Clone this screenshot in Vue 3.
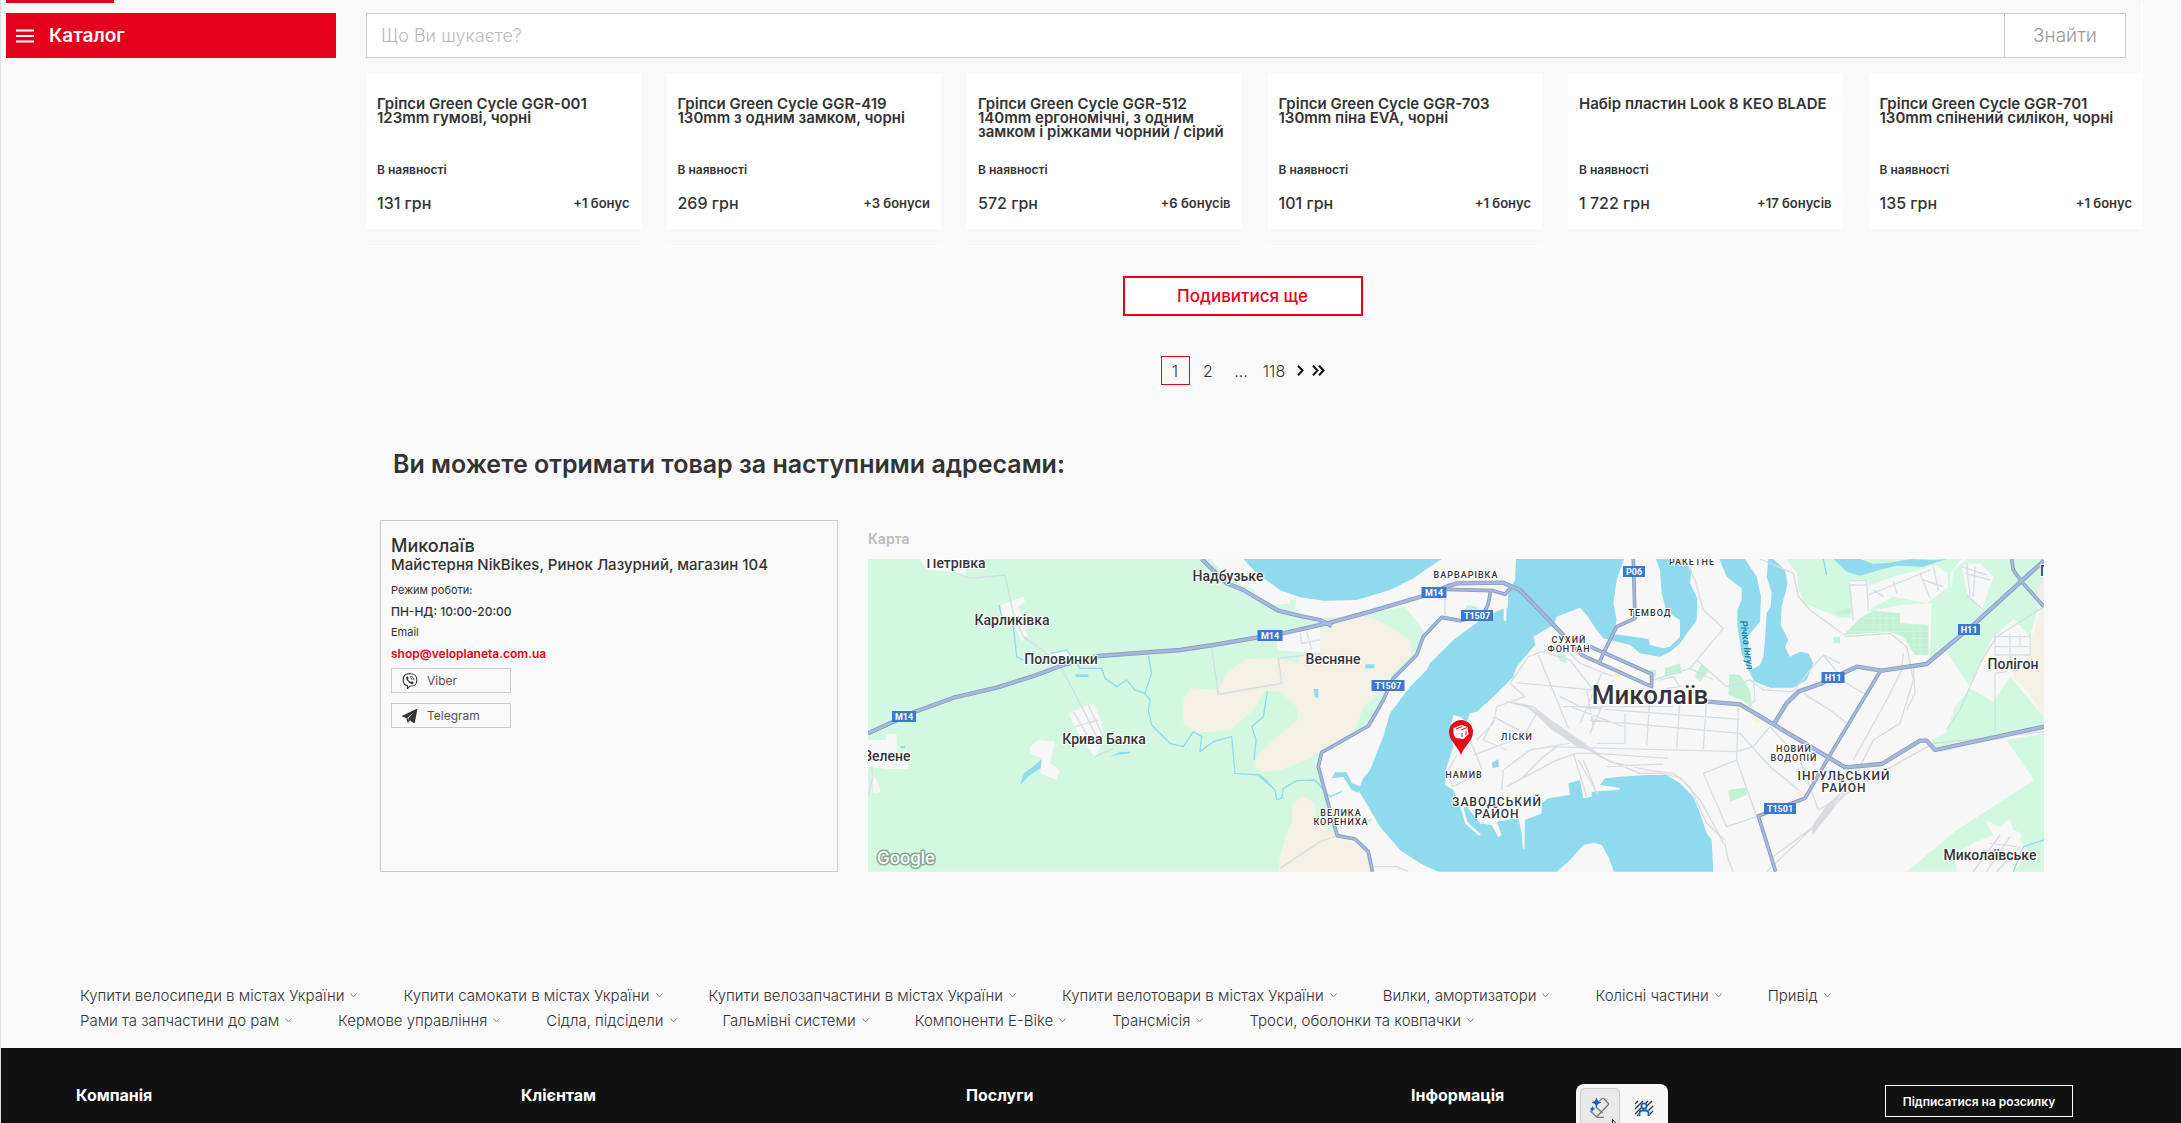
<script setup>
const products = [
  { title: 'Гріпси Green Cycle GGR-001 123mm гумові, чорні', price: '131 грн', bonus: '+1 бонус' },
  { title: 'Гріпси Green Cycle GGR-419 130mm з одним замком, чорні', price: '269 грн', bonus: '+3 бонуси' },
  { title: 'Гріпси Green Cycle GGR-512 140mm ергономічні, з одним замком і ріжками чорний / сірий', price: '572 грн', bonus: '+6 бонусів' },
  { title: 'Гріпси Green Cycle GGR-703 130mm піна EVA, чорні', price: '101 грн', bonus: '+1 бонус' },
  { title: 'Набір пластин Look 8 KEO BLADE', price: '1 722 грн', bonus: '+17 бонусів' },
  { title: 'Гріпси Green Cycle GGR-701 130mm спінений силікон, чорні', price: '135 грн', bonus: '+1 бонус' },
]

const linkRows = [
  [
    'Купити велосипеди в містах України',
    'Купити самокати в містах України',
    'Купити велозапчастини в містах України',
    'Купити велотовари в містах України',
    'Вилки, амортизатори',
    'Колісні частини',
    'Привід',
  ],
  [
    'Рами та запчастини до рам',
    'Кермове управління',
    'Сідла, підсідели',
    'Гальмівні системи',
    'Компоненти E-Bike',
    'Трансмісія',
    'Троси, оболонки та ковпачки',
  ],
]

const footerColumns = ['Компанія', 'Клієнтам', 'Послуги', 'Інформація']

// Map labels: text, centre x, baseline y, style
const places = [
  ['Петрівка', 88, 9, 'town'],
  ['Карликівка', 144, 66, 'town'],
  ['Надбузьке', 360, 22, 'town'],
  ['Половинки', 193, 105, 'town'],
  ['Весняне', 465, 105, 'town'],
  ['Крива Балка', 236, 185, 'town'],
  ['Зелене', 19, 202, 'town'],
  ['Полігон', 1145, 110, 'town'],
  ['Миколаївське', 1122, 301, 'town'],
  ['Г', 1176, 17, 'town'],
  ['Миколаїв', 782, 145, 'city'],
  ['ВАРВАРІВКА', 598, 19, 'area'],
  ['ТЕМВОД', 782, 57, 'area'],
  ['РАКЕТНЕ', 824, 6, 'area'],
  ['СУХИЙ', 701, 84, 'area'],
  ['ФОНТАН', 701, 93, 'area'],
  ['ЛІСКИ', 649, 181, 'area'],
  ['НАМИВ', 596, 219, 'area'],
  ['ВЕЛИКА', 473, 257, 'area'],
  ['КОРЕНИХА', 473, 266, 'area'],
  ['НОВИЙ', 926, 193, 'area'],
  ['ВОДОПІЙ', 926, 202, 'area'],
  ['ЗАВОДСЬКИЙ', 629, 247, 'district'],
  ['РАЙОН', 629, 259, 'district'],
  ['ІНГУЛЬСЬКИЙ', 976, 221, 'district'],
  ['РАЙОН', 976, 233, 'district'],
]

// Road shields: text, centre x, centre y, width
const shields = [
  ['M14', 36, 157, 24],
  ['M14', 402, 76, 25],
  ['M14', 566, 33, 25],
  ['T1507', 609, 56, 32],
  ['T1507', 520, 126, 33],
  ['P06', 766, 12, 22],
  ['H11', 965, 118, 23],
  ['H11', 1101, 70, 22],
  ['T1501', 912, 249, 32],
]

const highways = [
  'M-1236 580 -1095 515 -975 472 -850 443 -745 410 -650 375 -545 348 -300 330 -200 315 -65 292 0 282 150 248 270 215 430 168 500 140 530 130 670 128 720 150 850 285',
  'M-235 57 -160 130 -110 150 -5 212 60 228 120 240 155 258',
  'M1285 485 1380 493 1695 682 1805 672 1920 602 1940 602 1965 630 2292 560',
  'M1482 552 1520 490 1555 455 1620 432 1730 380 1805 392 1940 372 2085 250 2292 62',
]
const mainRoads = [
  'M500 148 640 152 675 163 690 145M632 152 625 190 610 225 540 242 485 232 430 290 410 345 340 415 310 480 265 558 125 637 115 680 150 810 172 887 225 897 265 935 277 995',
  'M1060 57 1065 235 1010 260 970 340 958 368M850 285 905 345 1115 440V402L920 315',
  'M2195 57 2200 90 2225 125 2292 200M1800 395 1647 650 1575 775 1435 828 1487 995',
]
</script>

<template>
  <div class="page">
    <header class="topbar">
      <div class="tab"></div>
      <div class="bar">
        <button class="catalog" type="button">
          <svg width="18" height="14" viewBox="0 0 18 14" aria-hidden="true"><path d="M0 1.5h18M0 7h18M0 12.5h18" stroke="#fff" stroke-width="2" /></svg>
          Каталог
        </button>
        <form class="search" @submit.prevent>
          <input type="search" placeholder="Що Ви шукаєте?" aria-label="Що Ви шукаєте?" />
          <button type="submit">Знайти</button>
        </form>
      </div>
    </header>

    <main class="content">
      <section class="grid">
        <article v-for="(p, i) in products" :key="p.title" class="cell" :class="{ underlined: i < 4 }">
          <div class="card">
            <h3>{{ p.title }}</h3>
            <p class="stock">В наявності</p>
            <p class="offer"><span class="price">{{ p.price }}</span><span class="bonus">{{ p.bonus }}</span></p>
          </div>
        </article>
      </section>

      <div class="pager">
        <button class="more" type="button">Подивитися ще</button>
        <nav class="pages">
          <a class="num current" href="#">1</a>
          <a class="num" href="#">2</a>
          <span class="num">...</span>
          <a class="num" href="#">118</a>
          <a class="step" href="#" aria-label="Далі"><svg width="7" height="11" viewBox="0 0 7 11"><path d="M1 .7 5.5 5.5 1 10.3" /></svg></a>
          <a class="step" href="#" aria-label="В кінець"><svg width="13" height="11" viewBox="0 0 13 11"><path d="M1 .7 5.5 5.5 1 10.3M7 .7l4.5 4.8L7 10.3" /></svg></a>
        </nav>
      </div>

      <section class="pickup">
        <h2>Ви можете отримати товар за наступними адресами:</h2>
        <div class="places">
          <div class="store">
            <p class="town-name">Миколаїв</p>
            <p class="address">Майстерня NikBikes, Ринок Лазурний, магазин 104</p>
            <p class="label">Режим роботи:</p>
            <p class="hours">ПН-НД: 10:00-20:00</p>
            <p class="label">Email</p>
            <p class="mail"><a href="mailto:shop@veloplaneta.com.ua">shop@veloplaneta.com.ua</a></p>
            <a class="chat" href="#">
              <svg width="16" height="16" viewBox="0 0 16 16" fill="none" stroke="#333" aria-hidden="true">
                <path d="M8 .8c5 0 6.800 1.500 6.800 6.200S13 13.200 8 13.200L5.500 15.500V12.800C2.400 12.100 1.200 10.500 1.200 7 1.200 2.300 3 .8 8 .8Z" stroke-width="1.100" />
                <path d="M5 3.600c.6-.3.9.1 1.600 1.200.4.700-.7 1-.5 1.500.4 1.300 1.400 2.300 2.700 2.700.5.200.8-.9 1.500-.5 1.100.8 1.500 1.100 1.200 1.700-.8 1.300-1.700 1.100-3.100.3C6.300 9.200 4.900 7.400 4.300 5.500 4 4.600 4.100 4.100 5 3.600Z" fill="#333" stroke="none" />
                <path d="M8 3.200c2.500.1 3.800 1.400 3.900 3.900M8.200 5c1.200.1 1.900.8 1.900 2" stroke-width=".8" />
              </svg>
              Viber
            </a>
            <a class="chat" href="#">
              <svg width="16" height="16" viewBox="0 0 16 16" fill="#333" aria-hidden="true"><path d="M15.300 1.500 12.900 14.300c-.2.800-.7 1-1.400.6L8 12.300l-1.800 2.200c-.3.300-.7.200-.8-.2L4.300 10 .6 8.800C-.2 8.500-.2 8 .8 7.600L14.300 1c.7-.3 1.200 0 1 .5ZM5.600 9.700l.5 2.900.5-2.600L12 4.300Z" /></svg>
              Telegram
            </a>
          </div>
          <div class="map-block">
            <p class="map-title">Карта</p>
            <svg class="map" viewBox="0 0 1176 313" preserveAspectRatio="xMidYMid slice" role="img" aria-label="Карта">
              <rect width="1176" height="313" fill="#f7f7f7" />
              <g transform="translate(412 -19) scale(.333333)" fill="none" stroke-linejoin="round">
                <!-- fields and forests -->
                <g fill="#d3f8e2">
                  <path d="M-1236 57H-210L-150 120-75 150 0 190 50 170 45 210 110 235 200 230 375 200 435 275 410 345 330 430 270 560 120 640 118 680 160 860 175 890 0 995H-1236Z" />
                  <path d="M1520 57 1550 100 1555 140 1570 190 1680 232 1715 235 1715 160 1705 120H1765V215L1780 212 1860 195 1955 190 2010 150V100L2045 57Z" />
                  <path d="M1955 190 2015 140 2020 90 2060 57H2292V140L2250 290 2200 237 2140 290 2070 440 2000 335 1948 370Z" />
                  <path d="M2070 445 2140 485 2190 410 2292 530V570L1970 638 1955 600 2000 575 2025 500Z" />
                  <path d="M2180 600 2292 580V995H1880L2030 870 2262 720Z" />
                </g>
                <!-- dry land -->
                <g fill="#f5f0e5">
                  <path d="M-290 480-270 445-185 450-160 400-100 358-5 355 50 370 60 350 125 270 180 235 230 227 280 235 330 260 390 300 395 345 340 400 310 450 250 500 225 570 120 635 80 660 0 690-50 695-75 680-70 650-10 590 55 540 50 500 0 455-45 450-80 510-150 570-250 578-290 550Z" />
                  <path d="M-5 995 0 950 20 880 37 840 35 795 65 768 105 790V830L160 880 270 935 280 995Z" />
                  <path d="M2292 100 2270 160 2280 220 2255 290 2250 350 2210 380 2200 410 2240 450 2292 530Z" />
                </g>
                <!-- parks -->
                <g fill="#c3f1d5">
                  <path d="M1690 285 1740 235 1780 212 1860 220V250L1945 255V345H1905L1870 290 1830 275ZM1668 215 1710 205 1718 220 1670 225ZM1660 290H1680V310H1660Z" />
                  <path d="M1155 385 1200 370 1205 400 1155 408ZM1245 410 1262 375 1288 390 1260 425ZM1348 402 1380 405 1410 450 1415 500 1385 480 1345 465ZM1345 750 1400 742V765L1350 785ZM832 342 858 345 860 370 840 362ZM750 300 765 298 768 315 755 318ZM1110 390H1128V410H1110ZM560 195 590 200 600 220 555 215ZM262 840 275 835 272 855Z" />
                </g>
                <!-- settlements -->
                <g fill="#f7f7f7">
                  <path d="M-835 195-770 170-765 185-785 200-758 285-775 303-800 250-835 240ZM-635 520-560 490-535 545-528 600-555 650-600 590ZM-725 600-675 605-690 670-660 690-670 720-720 700-715 655-750 640V620ZM-1235 600H-1182V582H-1150V655H-1115V687H-1180L-1235 680ZM-1225 680-1198 755-1220 760ZM-1080 57H-935L-945 105-970 95-1060 90ZM-160 57H-110L-60 130 30 160V190L-20 195-75 165-80 130-155 80ZM-8 290 60 275 120 262V335H60L-8 330ZM-700 335-640 330-620 345-650 375-690 370Z" />
                  <path d="M1760 140 1840 110 1970 75 2000 100 2005 140 1940 190 1840 170 1765 210ZM2045 75 2100 70 2140 110 2125 150 2105 215 2060 160ZM2115 840 2160 860 2190 835 2200 870 2225 880 2220 900 2250 940 2200 995H2030L2025 940 2090 905 2140 885Z" />
                </g>
                <!-- water -->
                <g fill="#90daee">
                  <path d="M-110 57-70 100 0 150 60 172 130 182 230 180 330 150 400 115 450 80 485 57Z" />
                  <path d="M708 57 705 120 685 160 683 205 665 208 615 230 560 270 520 300 450 370 440 390 390 440 330 520 310 590 290 640 270 690 250 715 235 750 265 800 300 860 360 930 420 970 475 995H830L870 960 910 915 940 908 965 915 985 950 1002 995H1300L1295 900 1280 880 1260 820 1240 770 1200 730 1160 705 1100 705 1020 710 975 715 960 735 1020 743 1018 750 935 755V770L910 775 900 720 865 730 870 765 805 775 785 790 785 820 735 840 733 930 728 925 725 880 715 835 650 845 665 885 655 892 635 855 600 850 560 800 545 805 520 750 495 735 500 680 520 620 510 570 520 525 540 530 560 545 570 520 590 515 640 470 700 410 710 380 765 315 760 290 820 255 830 230 900 203 920 225 950 270 970 295 1050 315 1080 340 1140 350 1170 335 1200 310 1250 240 1252 175 1230 130 1235 90 1215 57H1128L1140 90 1145 160 1160 215 1200 240V290L1170 320 1150 325 1110 315 1105 297 1060 290 1000 282 1010 240 1000 190 1010 120 1032 57Z" />
                  <path d="M1318 57 1340 110 1385 145V180L1372 210V260L1385 340 1410 400 1425 425 1470 443H1540L1580 420 1600 370 1585 340 1560 335 1530 350 1515 320 1525 300 1502 255 1505 200 1523 130 1515 90 1480 57H1465L1460 110 1475 160 1472 200 1460 220 1455 300 1450 350 1440 375 1412 390 1402 290 1440 245 1443 170 1430 110 1395 57Z" />
                  <path d="M1660 57 1700 95 1740 107 1790 92 1850 77 1930 80 2000 57 1960 60 1890 57 1830 68 1780 72 1740 57Z" />
                  <path d="M155 715 165 697H200L215 730 240 738 235 758 215 750 190 710ZM635 670 655 657 657 680 638 685ZM-780 735-768 700-735 675-715 658-718 685-750 705ZM-510 650-480 635H-450V640L-490 645ZM-615 403H-575V412H-612ZM100 447H115V473H105ZM257 373H283V385H255ZM-70 705-45 715-20 743-35 735ZM-1140 618H-1125V625H-1138Z" />
                </g>
                <g stroke="#90daee" stroke-width="4">
                  <path d="M-843 195-835 230-800 260-790 350-770 360M-690 340-640 330-600 385-535 385-525 415-490 440-460 420-435 450-405 460-390 480-395 510-385 555-330 610-290 620-260 575-235 590-240 635-200 605-145 590-135 700-60 705-15 750-10 778 5 775 10 745 50 722 105 720 150 770 185 755M-395 347-385 400-405 460M-38 455-50 530-85 560-72 600-78 660M1640 105 1630 57M2200 995 2230 920 2292 900" />
                </g>
                <g stroke="#f7f7f7" stroke-width="8"><path d="M545 800 560 850 600 885M675 205V243" /></g>
                <!-- railways -->
                <g stroke="#d8dbdf" stroke-width="4">
                  <path d="M680 485 740 500 860 590 960 650 1080 700 1140 700 1200 712 1260 780 1310 870 1330 910M700 487 760 500 880 600 990 665 1110 692 1180 700 1230 740 1280 850 1335 900M735 495 850 570 950 640 1165 655M980 680 1150 672M680 740 830 660 890 640 960 640M720 720 790 650 830 620M880 640 920 770M895 660 955 765M910 660 945 745M1335 910 1345 960 1360 995M1460 995 1560 900 1700 760 1800 700 1960 610 2292 575M1480 950 1640 830 1720 720 1780 600 1860 550 1900 420 1880 320 1830 280 1700 290 1590 210 1555 170 1540 100 1440 57" />
                </g>
                <path d="M1595 860 1640 795 1690 750 1640 830 1598 885ZM735 490 800 530 900 600 955 640 890 620 810 565Z" fill="#d8dbdf" />
                <!-- streets -->
                <g stroke="#d5dee6" stroke-width="4">
                  <path d="M-970 100-930 115-825 105-800 220-770 290-700 340-655 385-595 500M-620 515-570 600M-595 500-545 600M-575 495-530 590M-615 560-545 540M-555 650-500 625M-205 325-185 463 5 430-5 355 120 340M-1236 765-1220 710-1225 680M60 280 65 310 120 300M80 275 95 330M0 985 120 905 172 887M280 980 350 980 385 995" />
                  <path d="M690 430 745 350 785 335 870 360M710 428 940 450M775 345 865 565M840 470 900 500 1000 510M690 430 735 470 650 500 640 550 590 600M640 530 735 580M570 600 605 685M580 645 730 590 770 520M1000 510 1380 538M930 540 1380 580M920 450 940 560M965 400 900 550M1000 420 930 580M850 500H1180M1110 470 1100 615M1200 480 1190 625M1280 470 1270 628M1375 500 1370 660M1035 520V610H950M1030 560 870 500M800 620 1370 635 1420 620 1470 560 1560 660 1615 810 1650 790M1380 580 1470 680 1580 770M1370 660 1270 700 1340 860 1430 830 1370 660M1120 420 1230 385 1330 265 1270 210 1245 120 1215 57M1230 385 1300 420M1250 360 1340 440 1410 420 1450 450 1540 455 1590 390 1630 345 1680 370M1570 460 1650 510 1700 548M1630 345 1700 430 1750 460M1865 390 1820 480 1720 660M1865 390 1870 340M1900 380 1905 460 1880 510M665 750 670 690 750 630 870 610M640 540 610 600 680 630M530 645 500 700 520 740 600 700M870 360 940 450M850 320 900 370 1000 410M495 160V230M1140 420 1180 410 1200 440 1160 445M1420 420 1425 480 1405 500M2000 570 2040 510 2100 370 2150 290 2292 200M2145 580 2145 400 2180 395" />
                  <path d="M1705 122H1760L1765 210M1710 135H1760M1720 240 1708 130M1780 150 1810 170M1840 125 1850 160M1765 165 1950 90M1920 100 1950 175M1960 80 1975 150M1930 120 1990 140M2045 80 2120 105M2060 70 2070 170M2085 80 2080 170M2055 100 2130 120M2060 165 2110 210M2140 290H2250M2145 320H2245M2145 280V345H2250V280M2190 280V380M2220 280V320M2110 930 2200 940M2130 910 2210 920M2090 950 2190 965M2160 885 2080 995M2190 890 2120 995M2220 920 2150 995" />
                </g>
                <g stroke="#d3f8e2" stroke-width="2"><path d="M1710 275H1860M1730 255H1940M1750 235H1860M1860 275H1945M1870 295H1945M1885 315H1945M1780 215V285M1800 215V280M1820 215V275M1840 218V275M1900 255V345M1920 255V345" /></g>
                <g stroke="#fdf1d8" stroke-width="14"><path d="M1000 410 1035 390M1015 380V420M1425 545 1445 535M1550 755 1570 770" /></g>
                <!-- highways -->
                <g stroke="#879bc4" stroke-width="13"><path v-for="d in highways" :key="d" :d="d" /></g>
                <g stroke="#879bc4" stroke-width="11"><path v-for="d in mainRoads" :key="d" :d="d" /></g>
                <g stroke="#a8b8da" stroke-width="8"><path v-for="d in highways" :key="d" :d="d" /></g>
                <g stroke="#a8b8da" stroke-width="6"><path v-for="d in mainRoads" :key="d" :d="d" /></g>
              </g>
              <text v-for="(p, i) in places" :key="i" :x="p[1]" :y="p[2]" :class="p[3]">{{ p[0] }}</text>
              <text class="river" transform="translate(872 62) rotate(82)">Річка Інгул</text>
              <g v-for="(s, i) in shields" :key="'s' + i">
                <rect :x="s[1] - s[3] / 2" :y="s[2] - 5" :width="s[3]" height="11" fill="#3b78cf" />
                <text class="shield" :x="s[1]" :y="s[2] + 4">{{ s[0] }}</text>
              </g>
              <g class="pin" transform="translate(581 161)">
                <path d="M12 35C9 26 0 21 0 12a12 12 0 0 1 24 0C24 21 15 26 12 35Z" fill="#e30b17" />
                <path d="m4.500 8 8-3 6 2 1 7-5 5-8-1-2-4Z" fill="#fff" />
                <path d="m7 9 6-2.500M13 17v-4M17 15v-4M12 10l6-2.500" stroke="#e30b17" fill="none" />
              </g>
              <text class="google" x="9" y="305">Google</text>
            </svg>
          </div>
        </div>
      </section>
    </main>

    <nav class="links">
      <div v-for="(row, r) in linkRows" :key="r" class="link-row">
        <a v-for="l in row" :key="l" href="#">{{ l }}<svg width="7" height="5" viewBox="0 0 7 5" aria-hidden="true"><path d="M.5.5l3 3.500 3-3.500" fill="none" stroke="#888" /></svg></a>
      </div>
    </nav>

    <footer class="footer">
      <h4 v-for="c in footerColumns" :key="c">{{ c }}</h4>
      <button class="subscribe" type="button">Підписатися на розсилку</button>
      <div class="tools">
        <button class="tool active" type="button" aria-label="Стерти об’єкт">
          <svg width="20" height="22" viewBox="0 0 20 22" fill="none" stroke="#777" stroke-width="1.300">
            <path d="M9.500 4 12 1.800q1-.8 2 0L18 6q1 1 0 2L7.500 19q-1 1-2 0L1.500 15q-1-1 0-2L3 11.500M5.500 9.500l7 6.500M6.500 20.300H14" />
            <path d="M6.500.5 8 4l3.500 1.500L8 7 6.500 10.500 5 7 1.500 5.500 5 4ZM2.500 9l.9 2 2 .9-2 .9-.9 2-.9-2-2-.9 2-.9Z" fill="#0a62bd" stroke="none" />
          </svg>
          <svg class="cursor" width="9" height="13" viewBox="0 0 9 13"><path d="M.5.5v12l3-3h5Z" fill="#fff" stroke="#111" /></svg>
        </button>
        <button class="tool" type="button" aria-label="Розмити тло">
          <svg width="20" height="16" viewBox="0 0 20 16" fill="none">
            <path d="M1 4 4 1M1 9 9 1M1 14 14 1M3 16 18 1M11 14 19 6M14 16l5-5" stroke="#333" stroke-width="1.300" />
            <path d="M4.500 16v-3q0-3.500 3-3.500h5q3 0 3 3.500v3Z" fill="#f7f7f7" />
            <path d="M5.500 16v-3q0-2.500 2.500-2.500h4q2.500 0 2.500 2.500v3" stroke="#1464b4" stroke-width="1.800" />
            <circle cx="10" cy="6" r="2.600" fill="#f7f7f7" stroke="#1464b4" stroke-width="1.800" />
          </svg>
        </button>
      </div>
    </footer>
  </div>
</template>

<style>
body {
  margin: 0;
  background: #f9f9f9;
}
</style>

<style scoped>
* {
  box-sizing: border-box;
}
.page {
  display: flex;
  flex-direction: column;
  min-height: 100vh;
  border-left: 1px solid #dedede;
  border-right: 1px solid #dedede;
  background: #f9f9f9;
  color: #333;
  font-family: Inter, "Noto Sans", sans-serif;
}
h2, h3, h4, p {
  margin: 0;
}
a {
  color: inherit;
  text-decoration: none;
}
button, input {
  margin: 0;
  border-radius: 0;
  font-family: inherit;
  color: inherit;
}
.topbar {
  padding: 0 38px 0 5px;
}
.tab {
  width: 108px;
  height: 3px;
  background: #e4001b;
}
.bar {
  display: flex;
  gap: 30px;
  padding: 10px 15px 15px 0;
  border-right: 2px solid #fff;
}
.catalog {
  display: flex;
  align-items: center;
  gap: 15px;
  flex: 0 0 330px;
  height: 45px;
  padding: 0 10px;
  border: 0;
  background: #e4001b;
  color: #fff;
  font-size: 19px;
  font-weight: 600;
}
.search {
  display: flex;
  flex: 1;
  border: 1px solid #ccc;
  background: #fff;
}
.search input {
  flex: 1;
  min-width: 0;
  padding: 0 14px;
  border: 0;
  background: transparent;
  font-size: 18px;
  font-weight: 300;
}
.search input::placeholder {
  color: #bbb;
}
.search button {
  width: 121px;
  padding: 0;
  border: 0;
  border-left: 1px solid #ccc;
  background: transparent;
  color: #999;
  font-size: 19px;
  font-weight: 300;
}
.content {
  padding: 0 38px 0 365px;
}
.grid {
  display: grid;
  grid-template-columns: repeat(6, 1fr);
  column-gap: 26px;
}
.cell {
  height: 174px;
}
.underlined {
  border-bottom: 1px solid #fff;
}
.card {
  padding: 24px 11px 13px;
  background: #fff;
}
.card h3 {
  height: 42px;
  font-size: 15px;
  line-height: 14px;
  font-weight: 600;
}
.stock {
  margin-top: 22px;
  font-size: 12px;
  line-height: 18px;
  font-weight: 600;
}
.offer {
  display: flex;
  justify-content: space-between;
  align-items: center;
  margin-top: 12px;
  line-height: 25px;
}
.price {
  font-size: 16px;
  font-weight: 500;
}
.bonus {
  font-size: 13px;
  font-weight: 600;
}
.pager {
  display: flex;
  flex-direction: column;
  align-items: center;
  gap: 40px;
  padding: 29px 24px 0 0;
}
.more {
  width: 240px;
  height: 40px;
  border: 2px solid #e4001b;
  background: #fff;
  color: #e4001b;
  font-size: 17px;
  font-weight: 500;
}
.pages {
  display: flex;
  align-items: center;
  font-size: 16px;
  font-weight: 300;
}
.num {
  display: flex;
  justify-content: center;
  align-items: center;
  width: 33px;
  height: 29px;
}
.num.current {
  width: 29px;
  margin-right: 2px;
  border: 1px solid #e4001b;
}
.step {
  display: flex;
  margin-left: 8px;
}
.num + .step {
  margin-left: 6px;
}
.step path {
  fill: none;
  stroke: #111;
  stroke-width: 2;
}
.pickup h2 {
  padding: 63px 0 40px 27px;
  font-size: 25px;
  line-height: 32px;
  font-weight: 600;
}
.places {
  display: flex;
  gap: 30px;
  padding: 0 99px 0 14px;
}
.store {
  flex: 0 0 458px;
  padding: 14px 10px;
  border: 1px solid #ccc;
}
.town-name {
  font-size: 18px;
  line-height: 22px;
  font-weight: 500;
}
.address {
  margin-bottom: 7px;
  font-size: 15px;
  line-height: 16px;
  font-weight: 500;
}
.label, .hours, .mail {
  font-size: 12px;
  line-height: 21px;
}
.label {
  font-size: 11px;
}
.hours {
  font-weight: 500;
}
.mail {
  color: #e4001b;
  font-weight: 600;
}
.chat {
  display: flex;
  align-items: center;
  gap: 9px;
  width: 120px;
  height: 25px;
  margin: 4px 0 10px;
  padding: 0 10px;
  border: 1px solid #ccc;
  color: #555;
  font-size: 12px;
}
.map-block {
  flex: 1;
  min-width: 0;
  padding-top: 9px;
}
.map-title {
  margin-bottom: 10px;
  color: #bbb;
  font-size: 14px;
  line-height: 20px;
  font-weight: 600;
}
.map {
  display: block;
  width: 100%;
  height: 313px;
}
.map text {
  font-family: Roboto, sans-serif;
  font-weight: 500;
  text-anchor: middle;
  fill: #333539;
  stroke: #fff;
  stroke-width: 2px;
  stroke-linejoin: round;
  paint-order: stroke;
}
.map .town {
  font-size: 14px;
}
.map .city {
  font-size: 26px;
}
.map .area {
  font-size: 9px;
  letter-spacing: 1px;
}
.map .district {
  font-size: 12px;
  letter-spacing: 1px;
}
.map .shield {
  fill: #fff;
  stroke: none;
  font-size: 9px;
  font-weight: 700;
}
.map .river {
  fill: #15809b;
  stroke: none;
  font-size: 10px;
  font-style: italic;
  text-anchor: start;
}
.map .google {
  font-family: Inter, sans-serif;
  font-size: 17px;
  fill: #fff;
  stroke: #8aa796;
  stroke-width: 3px;
  text-anchor: start;
}
.links {
  padding: 111px 79px 15px;
}
.link-row {
  display: flex;
  column-gap: 46px;
  font-size: 15px;
  line-height: 25px;
  font-weight: 300;
}
.link-row a {
  display: flex;
  align-items: center;
  gap: 6px;
  white-space: nowrap;
}
.footer {
  position: relative;
  display: grid;
  grid-template-columns: repeat(4, 445px) 1fr;
  align-items: start;
  flex: 1;
  padding: 37px 75px 5px;
  overflow: hidden;
  background: #111;
  color: #fff;
}
.footer h4 {
  font-size: 16px;
  line-height: 20px;
  font-weight: 700;
}
.subscribe {
  justify-self: end;
  width: 188px;
  height: 32px;
  margin-right: 33px;
  padding: 0;
  border: 1px solid #fff;
  background: transparent;
  font-size: 12px;
  font-weight: 600;
}
.tools {
  position: absolute;
  top: 36px;
  left: 1575px;
  display: flex;
  gap: 4px;
  padding: 4px;
  width: 92px;
  height: 56px;
  border-radius: 8px;
  background: #f7f7f7;
}
.tool {
  position: relative;
  display: flex;
  justify-content: center;
  align-items: center;
  width: 40px;
  height: 48px;
  padding: 0 0 8px;
  border: 1px solid transparent;
  border-radius: 5px;
  background: transparent;
}
.tool.active {
  border-color: #c8c8c8;
  background: #e9e9e9;
}
.cursor {
  position: absolute;
  top: 30px;
  right: -2px;
}
</style>
